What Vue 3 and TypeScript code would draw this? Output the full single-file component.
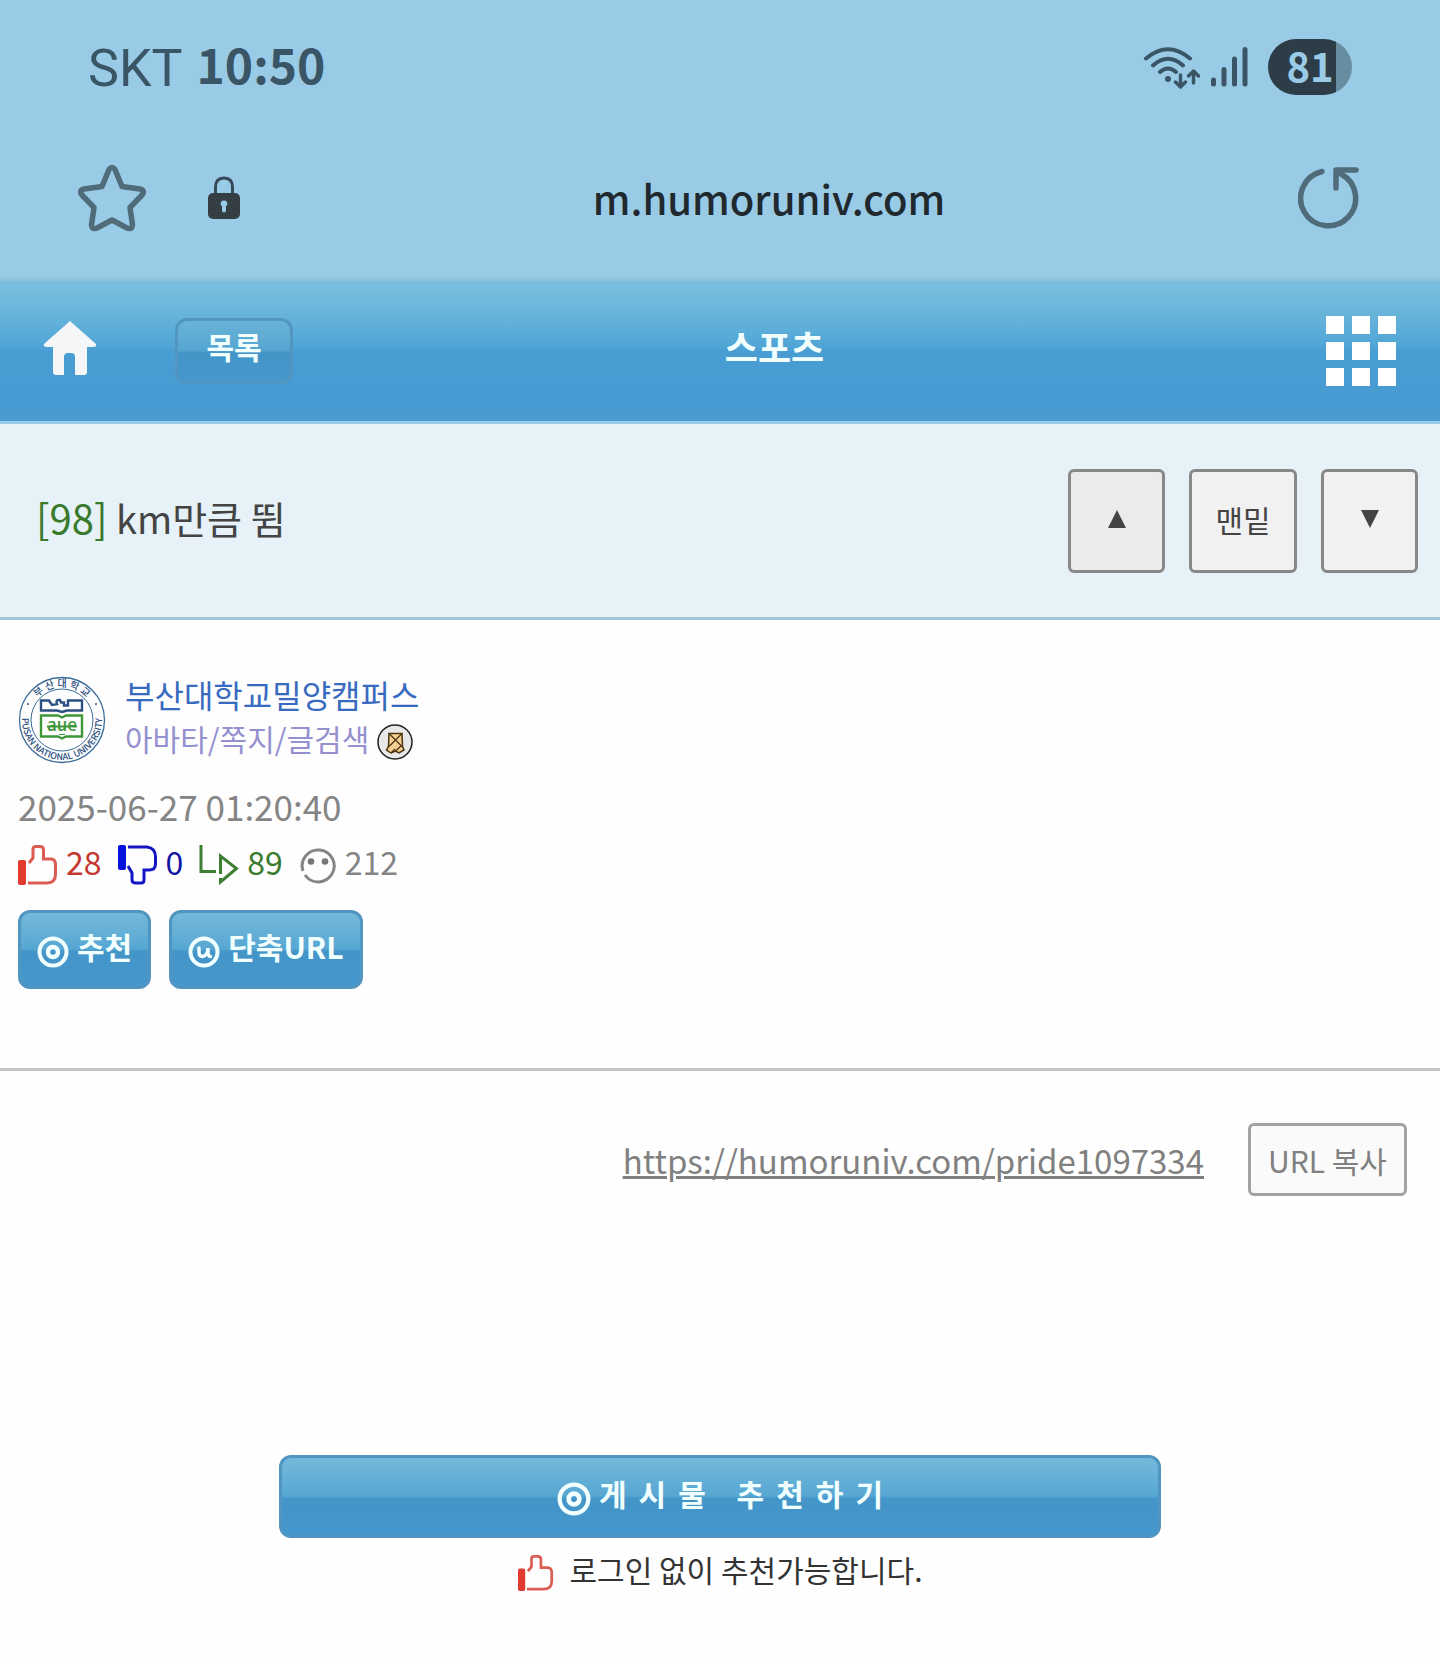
<script setup lang="ts">
interface Stat {
  kind: 'up' | 'down' | 'reply' | 'face'
  label: string
  value: number
}

const stats: Stat[] = [
  { kind: 'up', label: '추천', value: 28 },
  { kind: 'down', label: '반대', value: 0 },
  { kind: 'reply', label: '답글', value: 89 },
  { kind: 'face', label: '조회', value: 212 },
]

const shortUrl = 'https://humoruniv.com/pride1097334'
</script>

<template>
  <div class="page">
    <div class="chrome">
      <div class="status">
        <span class="carrier">SKT</span>
        <span class="clock">10:50</span>
        <span class="signals">
          <svg class="wifi" width="58" height="46" viewBox="0 0 58 46" fill="none" stroke="#3a5666" stroke-linecap="round" stroke-linejoin="round" aria-hidden="true">
            <g stroke-width="4">
              <path d="M4 14.500Q26 -4 48 14.500M11 21.500Q26 8 41 21.500M18 28Q26 21 34 28" />
            </g>
            <circle cx="26" cy="35" r="3" fill="#3a5666" stroke="none" />
            <path stroke-width="3.500" d="M38.500 31V42.500M33.500 38L38.500 43L43.500 38M51.500 39V27.500M46.500 32L51.500 27L56.500 32" />
          </svg>
          <svg class="bars" width="38" height="42" viewBox="0 0 38 42" stroke="#3a5666" stroke-width="5" stroke-linecap="round" aria-hidden="true">
            <path d="M3.500 34V38M14 23.500V38M24.500 13V38M35 3.500V38" />
          </svg>
          <span class="battery">81</span>
        </span>
      </div>
      <div class="address">
        <button class="plain star" type="button" aria-label="즐겨찾기">
          <svg width="68" height="68" viewBox="0 0 68 68" fill="none" stroke="#506c7b" stroke-width="5.500" stroke-linejoin="round">
            <path d="M31 5.500Q34 1.500 37 5.500L44 22.500L62 25Q67.500 26.500 64 31L52 43.500L54.500 61Q54 66 49 64L34 56L19 64Q14 66 13.500 61L16 43.500L4 31Q0.500 26.500 6 25L24 22.500Z" />
          </svg>
        </button>
        <svg class="lock" width="32" height="44" viewBox="0 0 32 44" aria-hidden="true">
          <path d="M7.500 20V11Q7.500 2 16 2T24.500 11V20" fill="none" stroke="#354a54" stroke-width="3" />
          <rect y="17" width="32" height="26" rx="5" fill="#343e43" />
          <path d="M16 24.500a3 3 0 0 1 2 5.500v5q-2 3-4 0v-5a3 3 0 0 1 2-5.500z" fill="#99cbe7" />
        </svg>
        <span class="host">m.humoruniv.com</span>
        <button class="plain" type="button" aria-label="새로고침">
          <svg width="62" height="62" viewBox="0 0 62 62" fill="none" stroke="#506c7b" stroke-width="5.500" stroke-linecap="round" stroke-linejoin="round">
            <path d="M24 4.500A27.500 27.500 0 1 0 43 7M58 3H38V21" />
          </svg>
        </button>
      </div>
    </div>

    <header class="topbar">
      <a class="home" href="#" aria-label="홈">
        <svg width="54" height="54" viewBox="0 0 54 54"><path fill="#f4f6f8" d="M27 0L53 23Q54 26 50 26H44V51Q44 54 41 54H32V36Q32 32 28 32H25Q21 32 21 36V54H13Q10 54 10 51V26H4Q0 26 1 23Z" /></svg>
      </a>
      <a class="glossy list" href="#">목록</a>
      <h1>스포츠</h1>
      <button class="plain menu" type="button" aria-label="메뉴">
        <span v-for="n in 9" :key="n" class="cell"></span>
      </button>
    </header>

    <section class="title">
      <h2><span class="count">[98]</span> km만큼 뜀</h2>
      <nav>
        <button class="jump pressed" type="button" aria-label="이전 글"><svg width="18" height="18" viewBox="0 0 18 18"><path d="M9 0L18 18H0Z" fill="#444" /></svg></button>
        <button class="jump wide" type="button">맨밑</button>
        <button class="jump" type="button" aria-label="다음 글"><svg width="18" height="18" viewBox="0 0 18 18"><path d="M0 0H18L9 18Z" fill="#444" /></svg></button>
      </nav>
    </section>

    <section class="info">
      <div class="author">
        <svg class="crest" width="88" height="88" viewBox="0 0 88 88" aria-hidden="true">
          <defs>
            <path id="crest-top" d="M11 44A33 33 0 0 1 77 44" />
            <path id="crest-bottom" d="M6.500 30A40 40 0 1 0 81.500 30" />
          </defs>
          <circle cx="44" cy="44" r="42.500" fill="none" stroke="#3c6d98" stroke-width="1.300" />
          <circle cx="44" cy="44" r="31" fill="none" stroke="#3c6d98" stroke-width="1" />
          <g fill="#2a4f80" class="crest-text">
            <text font-size="10" text-anchor="middle">
              <textPath href="#crest-top" startOffset="50%">부 산 대 학 교</textPath>
            </text>
            <text font-size="9" text-anchor="middle">
              <textPath href="#crest-bottom" startOffset="50%">PUSAN NATIONAL UNIVERSITY</textPath>
            </text>
          </g>
          <circle cx="10" cy="28" r="1" fill="#2a4f80" />
          <circle cx="78" cy="28" r="1" fill="#2a4f80" />
          <path d="M23 34.500V24.500H31L34 29L39 28Q37 23.500 42 24L43 26.500H46V29.500H50V24.500H64V34.500H49L44 36L39 34.500Z" fill="none" stroke="#2a4f80" stroke-width="2.400" />
          <path d="M23 39.500H40L44 41.500L48 39.500H64V60.500H48L44 62.500L40 60.500H23Z" fill="none" stroke="#3e9638" stroke-width="2.400" />
          <text class="crest-text" x="44" y="55" font-size="17" font-weight="700" fill="#3e9638" text-anchor="middle">aue</text>
          <path d="M29 50.500H59" stroke="#3e9638" stroke-width="2" />
          <path d="M41 58.500H47" stroke="#3e9638" stroke-width="1" />
        </svg>
        <div class="names">
          <a class="nick" href="#">부산대학교밀양캠퍼스</a>
          <div class="tools">
            <a href="#">아바타/쪽지/글검색</a>
            <svg width="36" height="36" viewBox="0 0 36 36" aria-hidden="true">
              <circle cx="18" cy="18" r="17" fill="#e8e8e8" stroke="#222" stroke-width="1.500" />
              <path d="M12 9.500H25L25.500 22.500L27 26L22 29L18.500 27L14 29L9.500 26L11.500 22.500Z" fill="#f5cf94" stroke="#49330f" stroke-width="1.500" />
              <path d="M12 9.500L25 22.500M25 9.500L12 22.500M18.500 27L24 22M14 29L18 25" fill="none" stroke="#49330f" stroke-width="1.200" />
            </svg>
          </div>
        </div>
      </div>
      <time datetime="2025-06-27T01:20:40">2025-06-27 01:20:40</time>
      <ul class="stats">
        <li v-for="s in stats" :key="s.kind" :class="s.kind" :title="s.label">
          <svg v-if="s.kind === 'up'" width="40" height="40" viewBox="0 0 40 40">
            <rect y="15" width="8" height="25" rx="2" fill="#e03a31" />
            <path d="M11 18L15 13V4Q15 1.500 18 1.500H22Q25.500 1.500 25.500 5V14H33Q37.500 14 37.500 20V29Q37.500 38 29 38H10" fill="none" stroke="#db5c52" stroke-width="3" />
          </svg>
          <svg v-else-if="s.kind === 'down'" width="40" height="40" viewBox="0 0 40 40">
            <rect width="8" height="25" rx="2" fill="#0814dc" />
            <path d="M10 2H29Q37.500 3 37.500 12V19Q37.500 25 31 25H26V35Q26 38 23 38H18Q14 38 14 35V28L10 21" fill="none" stroke="#1416c4" stroke-width="3" />
          </svg>
          <svg v-else-if="s.kind === 'reply'" width="40" height="40" viewBox="0 0 40 40">
            <path d="M2 0V26.500H17M21.500 29V11L37.500 23.500L21.500 37V33" fill="none" stroke="#3f7f33" stroke-width="3" />
          </svg>
          <svg v-else width="38" height="38" viewBox="0 0 38 38">
            <path d="M4 25A16 16 0 1 1 6 29" fill="none" stroke="#858585" stroke-width="3" />
            <circle cx="12" cy="15.500" r="3.300" fill="#777" />
            <circle cx="26" cy="15.500" r="3.300" fill="#777" />
          </svg>
          <span>{{ s.value }}</span>
        </li>
      </ul>
      <div class="actions">
        <button class="glossy" type="button">
          <svg width="32" height="32" viewBox="0 0 32 32" fill="none" stroke="#f2ffff"><circle cx="16" cy="16" r="13.500" stroke-width="4" /><circle cx="16" cy="16" r="5" stroke-width="4.500" /></svg>
          <span>추천</span>
        </button>
        <button class="glossy" type="button">
          <svg width="32" height="32" viewBox="0 0 32 32" fill="none" stroke="#f2ffff" stroke-linecap="round"><circle cx="16" cy="16" r="13.500" stroke-width="4" /><path d="M11 12V16Q11 20.500 14.500 20.500Q19.500 20 20 12V17Q20.500 20.500 22.500 20.500" stroke-width="3.500" /></svg>
          <span>단축URL</span>
        </button>
      </div>
    </section>

    <main>
      <div class="share">
        <a :href="shortUrl">{{ shortUrl }}</a>
        <button class="copy" type="button">URL 복사</button>
      </div>
      <div class="vote">
        <button class="glossy big" type="button">
          <svg width="34" height="34" viewBox="0 0 32 32" fill="none" stroke="#f2ffff"><circle cx="16" cy="16" r="13.500" stroke-width="4" /><circle cx="16" cy="16" r="5" stroke-width="4.500" /></svg>
          <span class="spaced">게시물 추천하기</span>
        </button>
        <p>
          <svg width="36" height="36" viewBox="0 0 40 40" aria-hidden="true">
            <rect y="15" width="8" height="25" rx="2" fill="#e03a31" />
            <path d="M11 18L15 13V4Q15 1.500 18 1.500H22Q25.500 1.500 25.500 5V14H33Q37.500 14 37.500 20V29Q37.500 38 29 38H10" fill="none" stroke="#db5c52" stroke-width="3" />
          </svg>
          <span>로그인 없이 추천가능합니다.</span>
        </p>
      </div>
    </main>
  </div>
</template>

<style>
body {
  margin: 0;
  background: #fefefe;
}
</style>

<style scoped>
.page {
  font-family: "Noto Sans CJK KR", sans-serif;
  font-size: 30px;
  line-height: 40px;
  color: #444;
}
svg {
  display: block;
  flex: none;
}
a {
  color: inherit;
  text-decoration: none;
}
button {
  font: inherit;
  color: inherit;
  box-sizing: border-box;
}
.plain {
  padding: 0;
  border: 0;
  background: none;
}
.chrome {
  background: #99cbe7;
  padding-bottom: 16px;
  border-bottom: 4px solid #8fc3de;
}
.status {
  display: flex;
  align-items: center;
  height: 134px;
  padding: 0 88px;
  color: #3a5666;
}
.carrier {
  padding-top: 4px;
  font-family: Roboto, sans-serif;
  font-size: 52px;
}
.clock {
  margin-left: 14px;
  padding-bottom: 8px;
  font-size: 48px;
  font-weight: 700;
}
.signals {
  display: flex;
  align-items: center;
  margin-left: auto;
}
.bars {
  margin: 0 20px 0 10px;
}
.battery {
  width: 84px;
  height: 56px;
  border-radius: 28px;
  background: linear-gradient(90deg, #2d3d47 68px, #678da0 68px);
  color: #99cbe7;
  font-size: 40px;
  line-height: 52px;
  font-weight: 700;
  text-align: center;
}
.address {
  display: flex;
  align-items: center;
  height: 127px;
  padding: 0 80px 0 78px;
}
.star {
  margin-right: 62px;
}
.host {
  flex: 1;
  text-align: center;
  font-size: 40px;
  font-weight: 500;
  color: #20292d;
}
.topbar {
  display: flex;
  align-items: center;
  height: 140px;
  padding: 0 44px 0 43px;
  border-bottom: 3px solid #97cbe8;
  background: linear-gradient(#7cc0df, #63b2da 28%, #50a5d6 47%, #489dd3 50%, #489bd2 92%, #4b9bcd);
}
.home {
  margin-right: 78px;
  padding-bottom: 6px;
}
.glossy {
  display: flex;
  align-items: center;
  justify-content: center;
  border: 3px solid #5096c1;
  border-radius: 12px;
  background: linear-gradient(#74b9da, #57a7d3 49%, #4395c8 53%, #4697cd);
  color: #f2ffff;
  font-weight: 700;
}
.glossy svg {
  margin-top: 4px;
}
.glossy span {
  padding-bottom: 8px;
}
.list {
  box-sizing: border-box;
  width: 118px;
  height: 66px;
  padding-bottom: 10px;
  background: linear-gradient(#68b2d6, #56a6d2 48%, #4395c8 54%, #4697cb);
}
h1 {
  flex: 1;
  margin: 0;
  padding-bottom: 10px;
  text-align: center;
  font-size: 36px;
  color: #f2ffff;
}
.menu {
  display: grid;
  grid-template-columns: repeat(3, 18px);
  gap: 8px;
  justify-content: end;
  width: 140px;
}
.cell {
  height: 18px;
  background: #fff;
}
.title {
  display: flex;
  align-items: center;
  justify-content: space-between;
  padding: 45px 22px 44px 36px;
  border-bottom: 3px solid #a3c7d9;
  background: #e6f2f8;
}
h2 {
  margin: 0;
  padding-bottom: 8px;
  font-size: 38px;
  font-weight: 400;
}
.count {
  font-size: 40px;
  color: #3a7a2d;
}
nav {
  display: flex;
  gap: 24px;
}
.jump {
  display: flex;
  align-items: center;
  justify-content: center;
  width: 97px;
  height: 104px;
  padding: 0 0 4px;
  border: 3px solid #888;
  border-radius: 6px;
  background: #f1f1f1;
}
.wide {
  width: 108px;
}
.pressed {
  background: #ebebeb;
}
.info {
  padding: 56px 18px 79px;
  border-bottom: 3px solid #c4c4c4;
}
.author {
  display: flex;
  align-items: flex-start;
  gap: 19px;
  height: 88px;
}
.crest-text {
  font-family: "Noto Sans CJK KR", sans-serif;
  font-weight: 500;
}
.names {
  margin-top: -4px;
}
.nick {
  display: block;
  font-size: 32px;
  line-height: 44px;
  color: #386bbf;
}
.tools {
  display: flex;
  align-items: center;
  gap: 8px;
  line-height: 44px;
  color: #9590d0;
}
.tools svg {
  margin-top: 8px;
}
time {
  display: block;
  margin-top: 22px;
  font-size: 35px;
  color: #858585;
}
.stats {
  display: flex;
  gap: 16px;
  margin: 19px 0 25px;
  padding: 0;
  list-style: none;
  font-size: 32px;
}
.stats li {
  display: flex;
  align-items: center;
  gap: 8px;
}
.stats span {
  line-height: 32px;
  padding-bottom: 8px;
}
.up {
  color: #c4392f;
}
.down {
  color: #1416a4;
}
.reply {
  color: #3a7a2d;
}
.face {
  color: #858585;
}
.actions {
  display: flex;
  gap: 18px;
}
.actions .glossy {
  height: 79px;
  padding: 0 16px;
  gap: 8px;
}
.share {
  display: flex;
  align-items: center;
  justify-content: flex-end;
  gap: 44px;
  padding: 52px 33px 0;
  color: #808080;
}
.share a {
  font-size: 33px;
  text-decoration: underline;
  text-decoration-thickness: 3px;
}
.copy {
  width: 159px;
  height: 73px;
  padding: 0;
  border: 3px solid #a2a2a6;
  border-radius: 6px;
  background: #fafafa;
}
.vote {
  padding: 259px 0 66px;
}
.big {
  width: 61.2%;
  height: 83px;
  margin: 0 auto;
  padding: 0 0 0 12px;
  gap: 8px;
}
.spaced {
  letter-spacing: 12px;
}
p {
  display: flex;
  align-items: center;
  justify-content: center;
  gap: 16px;
  margin: 11px 0 0;
  color: #333;
}
p span {
  padding-bottom: 8px;
}
</style>
